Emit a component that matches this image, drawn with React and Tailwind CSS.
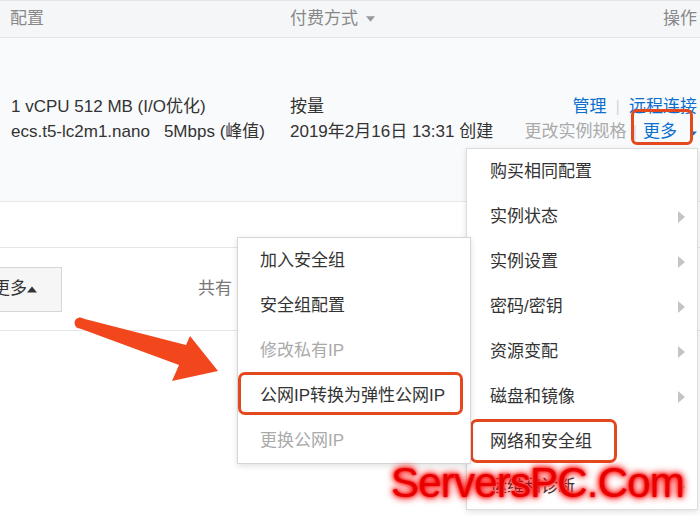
const mainItems = [
  { label: "购买相同配置", sub: false },
  { label: "实例状态", sub: true },
  { label: "实例设置", sub: true },
  { label: "密码/密钥", sub: true },
  { label: "资源变配", sub: true },
  { label: "磁盘和镜像", sub: true },
  { label: "网络和安全组", sub: false, marked: true },
  { label: "运维和诊断", sub: true },
];

const subItems = [
  { label: "加入安全组" },
  { label: "安全组配置" },
  { label: "修改私有IP", disabled: true },
  { label: "公网IP转换为弹性公网IP", marked: true },
  { label: "更换公网IP", disabled: true },
];

const Caret = ({ className }) => (
  <svg viewBox="0 0 10 6" className={className}>
    <polygon points="0,0 10,0 5,6" fill="currentColor" />
  </svg>
);

const SubArrow = () => (
  <svg viewBox="0 0 7 12" className="w-[7px] h-[12px] text-[#c4c4c4]">
    <polygon points="0,0 7,6 0,12" fill="currentColor" />
  </svg>
);

const App = () => {
  return (
    <div className="relative w-[700px] h-[517px] overflow-hidden bg-white text-[17px] text-[#333] font-['Liberation_Sans','Noto_Sans_CJK_SC',sans-serif]">
      {/* table header */}
      <div className="flex items-center h-[38px] bg-[#f5f6f8] border-t border-b border-[#e3e5e8] text-[#888]">
        <div className="w-[290px] pl-[10px]">配置</div>
        <div className="flex-1 flex items-center gap-[8px]">
          付费方式
          <Caret className="w-[9px] h-[6px] text-[#999]" />
        </div>
        <div className="pr-[3px]">操作</div>
      </div>

      {/* instance row */}
      <div className="flex h-[164px] pt-[56px] bg-[#f9fafb] border-b border-[#e5e7ea] leading-[25px]">
        <div className="w-[279px] pl-[11px]">
          <p className="whitespace-nowrap">1 vCPU 512 MB (I/O优化)</p>
          <p className="whitespace-nowrap">
            ecs.t5-lc2m1.nano<span className="ml-[14px]">5Mbps (峰值)</span>
          </p>
        </div>
        <div className="w-[228px] pl-[11px]">
          <p>按量</p>
          <p className="whitespace-nowrap">2019年2月16日 13:31 创建</p>
        </div>
        <div className="flex-1 flex flex-col items-end pr-[3px] whitespace-nowrap">
          <p className="flex items-center text-[#0b6fd0]">
            管理<span className="mx-[9px] text-[#d8d8d8]">|</span>远程连接
          </p>
          <p className="flex items-center">
            <span className="text-[#aaa]">更改实例规格</span>
            <span className="mx-[6px] text-[#d8d8d8]">|</span>
            <span className="relative text-[#0b6fd0]">
              更多
              <span className="absolute left-[-12px] top-[-10px] w-[62px] h-[36px] rounded-[6px] border-[3px] border-[#e4481f]" />
            </span>
            <Caret className="ml-[13px] mt-[4px] w-[7px] h-[5px] text-[#0b6fd0]" />
          </p>
        </div>
      </div>

      <div className="h-[46px] border-b border-[#e3e5e8]" />

      {/* batch bar */}
      <div className="flex items-center h-[83px] border-b border-[#e3e5e8]">
        <button className="ml-[-14px] w-[76px] h-[45px] flex items-center justify-end pr-[24px] bg-[#f6f6f6] border border-[#d6d6d6] text-[#333]">
          更多
          <Caret className="w-[10px] h-[7px] rotate-180 text-[#333]" />
        </button>
        <span className="ml-[136px] text-[#777]">共有 1 条</span>
      </div>

      {/* main dropdown */}
      <div className="absolute left-[466px] top-[148px] w-[232px] bg-white border border-[#dcdcdc] shadow-[0_2px_6px_rgba(0,0,0,0.12)]">
        {mainItems.map((item, i) => (
          <div key={i} className="relative flex items-center justify-between h-[45px] pl-[23px] pr-[12px]">
            <span>{item.label}</span>
            {item.sub && <SubArrow />}
            {item.marked && (
              <span className="absolute left-[3px] top-[0px] w-[147px] h-[44px] rounded-[7px] border-[3px] border-[#e4481f]" />
            )}
          </div>
        ))}
      </div>

      {/* network submenu */}
      <div className="absolute left-[237px] top-[237px] w-[234px] bg-white border border-[#d6d6d6] shadow-[0_2px_6px_rgba(0,0,0,0.12)]">
        {subItems.map((item, i) => (
          <div
            key={i}
            className={`relative flex items-center h-[45px] pl-[22px] whitespace-nowrap ${
              item.disabled ? "text-[#aaa]" : "text-[#333]"
            }`}>
            {item.label}
            {item.marked && (
              <span className="absolute left-[0px] top-[-1px] w-[225px] h-[43px] rounded-[7px] border-[3px] border-[#e4481f]" />
            )}
          </div>
        ))}
      </div>

      {/* annotation arrow */}
      <svg className="absolute left-0 top-0 w-[700px] h-[517px] pointer-events-none" viewBox="0 0 700 517">
        <circle cx="80" cy="323" r="5.5" fill="#f2471c" />
        <polygon
          points="79,317.5 186,345 190,336 218,371 172,381 179,365 80,328.5"
          fill="#f2471c"
        />
      </svg>

      {/* watermark */}
      <div className="absolute left-[391px] top-[459px] text-[42px] leading-[48px] tracking-[-0.8px] text-[#e60000] font-['Liberation_Sans',sans-serif] [-webkit-text-stroke:2px_#fff] [paint-order:stroke_fill] [text-shadow:0_0_3px_#ff0000,0_0_6px_#ff0000,0_0_9px_#ff0000]">
        ServersPC.Com
      </div>
    </div>
  );
};

export default App;
